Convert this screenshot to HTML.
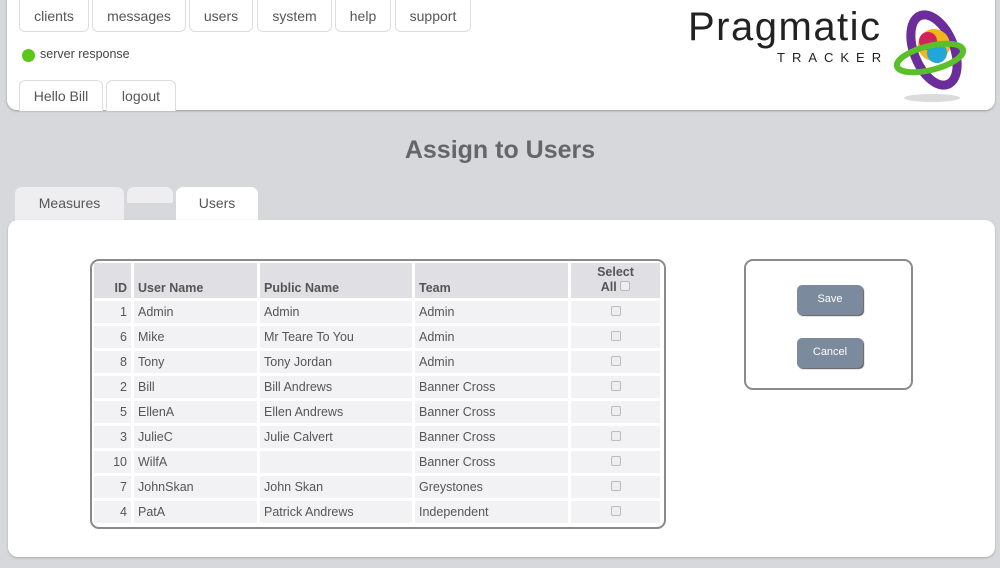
<!DOCTYPE html>
<html><head><style>
*{box-sizing:border-box;margin:0;padding:0}
body{width:1000px;height:568px;background:#d7d8dc;font-family:"Liberation Sans",sans-serif;position:relative;overflow:hidden;color:#444}
.a{position:absolute}
.hdr{left:7px;top:-10px;width:988px;height:120px;background:#fff;border-radius:10px;box-shadow:0 1px 2px #999}
.nb{position:absolute;background:#fff;border:1px solid #ddd;border-radius:0 0 6px 6px;font-size:14px;color:#555;text-align:center;line-height:32px}
.bb{position:absolute;background:#fff;border:1px solid #ddd;border-bottom:none;border-radius:6px 6px 0 0;font-size:14px;color:#555;text-align:center;line-height:30px}
.tab{position:absolute;border-radius:7px 7px 0 0;font-size:14px;color:#555;text-align:center;line-height:32px}
.panel{left:8px;top:220px;width:987px;height:337px;background:#fff;border-radius:10px;box-shadow:0 1px 2px #aaa}
table{border-spacing:3px;font-size:12.5px;color:#555}
td,th{background:#f2f2f4;height:22px;padding:0 4px}
th{background:#e0e0e4;text-align:left;vertical-align:bottom;height:35px;padding-bottom:3px;color:#555}
.cb{display:inline-block;width:10px;height:10px;border:1px solid #bbb;border-radius:2px;background:#eee}
.btn{position:absolute;left:51px;width:66px;height:30px;background:#7b8a9c;border-radius:5px;color:#fff;font-size:11px;text-align:center;line-height:28px;box-shadow:1px 1px 1px #555}
</style></head><body>
<div class="a hdr"></div>
<div class="nb" style="left:19px;top:-1px;width:70px;height:33px">clients</div>
<div class="nb" style="left:92px;top:-1px;width:94px;height:33px">messages</div>
<div class="nb" style="left:189px;top:-1px;width:64px;height:33px">users</div>
<div class="nb" style="left:257px;top:-1px;width:75px;height:33px">system</div>
<div class="nb" style="left:335px;top:-1px;width:56px;height:33px">help</div>
<div class="nb" style="left:395px;top:-1px;width:76px;height:33px">support</div>
<div class="a" style="left:22px;top:49px;width:13px;height:13px;border-radius:50%;background:#5cc71b"></div>
<div class="a" style="left:40px;top:47px;font-size:12.5px;color:#444">server response</div>
<div class="bb" style="left:19px;top:80px;width:84px;height:31px">Hello Bill</div>
<div class="bb" style="left:106px;top:80px;width:70px;height:31px">logout</div>
<div class="a" style="left:688px;top:5px;font-size:40px;color:#222;letter-spacing:1.5px;font-weight:300">Pragmatic</div>
<div class="a" style="left:777px;top:50px;font-size:13px;color:#222;letter-spacing:7px">TRACKER</div>
<svg class="a" style="left:890px;top:8px" width="80" height="98">
<ellipse cx="42" cy="90" rx="28" ry="4" fill="#ccc" opacity=".7"/>
<ellipse cx="44" cy="42" rx="20" ry="37" transform="rotate(-22 44 42)" fill="none" stroke="#6a2d9a" stroke-width="9"/>
<circle cx="44" cy="37" r="16" fill="#f2b51c"/><circle cx="38" cy="33" r="9" fill="#d2235a"/><circle cx="47" cy="45" r="10" fill="#21a6d8"/>
<ellipse cx="40" cy="50" rx="34" ry="12" transform="rotate(-14 40 50)" fill="none" stroke="#5bbf2a" stroke-width="6"/>
</svg>
<div class="a" style="left:0;width:1000px;top:136px;text-align:center;font-size:25px;font-weight:bold;color:#666">Assign to Users</div>
<div class="tab" style="left:15px;top:187px;width:109px;height:34px;background:#eeeef0">Measures</div>
<div class="tab" style="left:127px;top:187px;width:46px;height:16px;background:#eeeef0"></div>
<div class="tab" style="left:176px;top:187px;width:82px;height:34px;background:#fff">Users</div>
<div class="a panel"></div>
<div class="a" style="left:90px;top:259px;width:576px;height:270px;border:2px solid #8a8a8a;border-radius:9px;background:#fff;overflow:hidden">
<table style="position:absolute;left:-1px;top:-1px;width:572px">
<tr><th style="width:37px;text-align:right">ID</th><th style="width:123px">User Name</th><th style="width:152px">Public Name</th><th style="width:153px">Team</th><th style="text-align:center;line-height:15px">Select<br>All <span class="cb"></span></th></tr>
<tr><td align="right">1</td><td>Admin</td><td>Admin</td><td>Admin</td><td align="center"><span class="cb"></span></td></tr>
<tr><td align="right">6</td><td>Mike</td><td>Mr Teare To You</td><td>Admin</td><td align="center"><span class="cb"></span></td></tr>
<tr><td align="right">8</td><td>Tony</td><td>Tony Jordan</td><td>Admin</td><td align="center"><span class="cb"></span></td></tr>
<tr><td align="right">2</td><td>Bill</td><td>Bill Andrews</td><td>Banner Cross</td><td align="center"><span class="cb"></span></td></tr>
<tr><td align="right">5</td><td>EllenA</td><td>Ellen Andrews</td><td>Banner Cross</td><td align="center"><span class="cb"></span></td></tr>
<tr><td align="right">3</td><td>JulieC</td><td>Julie Calvert</td><td>Banner Cross</td><td align="center"><span class="cb"></span></td></tr>
<tr><td align="right">10</td><td>WilfA</td><td></td><td>Banner Cross</td><td align="center"><span class="cb"></span></td></tr>
<tr><td align="right">7</td><td>JohnSkan</td><td>John Skan</td><td>Greystones</td><td align="center"><span class="cb"></span></td></tr>
<tr><td align="right">4</td><td>PatA</td><td>Patrick Andrews</td><td>Independent</td><td align="center"><span class="cb"></span></td></tr>
</table></div>
<div class="a" style="left:744px;top:259px;width:169px;height:131px;border:2px solid #8a8a8a;border-radius:9px;background:#fff">
<div class="btn" style="top:24px">Save</div>
<div class="btn" style="top:77px">Cancel</div>
</div>
</body></html>
